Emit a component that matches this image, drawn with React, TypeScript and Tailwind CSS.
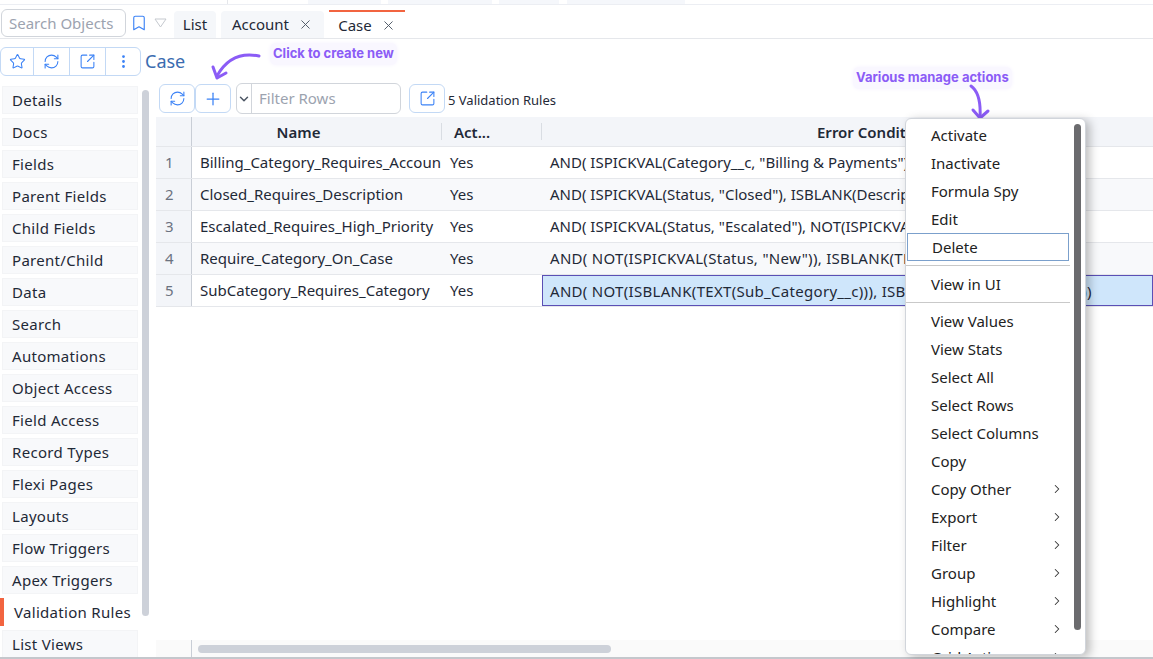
import React from 'react';
import { Bookmark, ChevronDown, ChevronRight, EllipsisVertical, Plus, RefreshCw, Star, SquareArrowOutUpRight, X } from 'lucide-react';

const navItems = [
  'Details', 'Docs', 'Fields', 'Parent Fields', 'Child Fields', 'Parent/Child', 'Data', 'Search', 'Automations',
  'Object Access', 'Field Access', 'Record Types', 'Flexi Pages', 'Layouts', 'Flow Triggers', 'Apex Triggers',
  'Validation Rules', 'List Views',
];

const rows = [
  { name: 'Billing_Category_Requires_Account', cond: 'AND( ISPICKVAL(Category__c, "Billing & Payments"), ISBLANK(AccountId))' },
  { name: 'Closed_Requires_Description', cond: 'AND( ISPICKVAL(Status, "Closed"), ISBLANK(Description))' },
  { name: 'Escalated_Requires_High_Priority', cond: 'AND( ISPICKVAL(Status, "Escalated"), NOT(ISPICKVAL(Priority, "High")))' },
  { name: 'Require_Category_On_Case', cond: 'AND( NOT(ISPICKVAL(Status, "New")), ISBLANK(TEXT(Category__c)))' },
  { name: 'SubCategory_Requires_Category', cond: 'AND( NOT(ISBLANK(TEXT(Sub_Category__c))), ISBLANK(TEXT(Category__c)))' },
];

type MenuEntry = { label: string; sub?: boolean; focus?: boolean } | 'sep';

const menu: MenuEntry[] = [
  { label: 'Activate' }, { label: 'Inactivate' }, { label: 'Formula Spy' }, { label: 'Edit' }, { label: 'Delete', focus: true },
  'sep',
  { label: 'View in UI' },
  'sep',
  { label: 'View Values' }, { label: 'View Stats' }, { label: 'Select All' }, { label: 'Select Rows' }, { label: 'Select Columns' },
  { label: 'Copy' }, { label: 'Copy Other', sub: true }, { label: 'Export', sub: true }, { label: 'Filter', sub: true },
  { label: 'Group', sub: true }, { label: 'Highlight', sub: true }, { label: 'Compare', sub: true }, { label: 'Grid Actions', sub: true },
];

const iconBtn = 'flex items-center justify-center border border-[#c3d9f5] text-[#3b82f6]';
const note = "absolute rounded-md bg-[#f9f7ff] px-[3px] py-[1px] text-[13px] font-bold text-[#8b5cf6] shadow-[0_0_4px_#f6f3ff] [font-family:Inter,sans-serif]";

export default function App() {
  return (
    <div className="relative h-[659px] w-[1153px] overflow-hidden bg-white text-[15px] text-[#1f2937] [font-family:'Noto_Sans',sans-serif]">
      {/* top strip */}
      <div className="flex h-[5px] border-b border-[#eceef3]">
        <div className="w-[228px] border-r border-[#e5e7eb]" />
        <div className="ml-[1px] w-[71px]" />
        <div className="ml-[8px] w-[73px] bg-[#f5f7fb]" />
        <div className="ml-[7px] w-[104px] bg-[#f5f7fb]" />
        <div className="ml-[7px] w-[60px] bg-[#f5f7fb]" />
        <div className="ml-[8px] w-[118px] bg-[#f5f7fb]" />
      </div>

      {/* tab bar */}
      <div className="flex h-[34px] items-end border-b border-[#e5e7eb] pl-[1px]">
        <div className="mb-[1px] flex h-[28px] w-[125px] items-center rounded-md border border-[#d1d5db] pl-[7px] text-[#9ca3af]">Search Objects</div>
        <Bookmark className="mb-[6px] ml-[4px] text-[#3b82f6]" size={18} strokeWidth={1.5} />
        <svg className="mb-[10px] ml-[6px]" width="13" height="10" viewBox="0 0 13 10" fill="none">
          <path d="M1 1h11L6.5 9z" stroke="#c5c9cf" strokeWidth="1" />
        </svg>
        <div className="ml-[7px] flex h-[27px] w-[42px] items-center justify-center rounded-t bg-[#f5f7fa]">List</div>
        <div className="ml-[5px] flex h-[27px] w-[103px] items-center justify-center gap-[9px] rounded-t bg-[#f5f7fa]">
          Account <X size={15} strokeWidth={1.5} className="text-[#4b5563]" />
        </div>
        <div className="ml-[5px] flex h-[28px] w-[76px] items-center justify-center gap-[9px] border-t-2 border-[#f26440] bg-white">
          Case <X size={15} strokeWidth={1.5} className="text-[#4b5563]" />
        </div>
      </div>

      {/* object header */}
      <div className="flex h-[44px] items-start pt-[8px]">
        <div className="flex h-[29px] w-[141px] shrink-0 rounded-md border border-[#c3d9f5] text-[#3b82f6]">
          <div className="flex w-[33px] items-center justify-center border-r border-[#c3d9f5]"><Star size={17} strokeWidth={1.5} /></div>
          <div className="flex w-[36px] items-center justify-center border-r border-[#c3d9f5]"><RefreshCw size={17} strokeWidth={1.5} /></div>
          <div className="flex w-[36px] items-center justify-center border-r border-[#c3d9f5]"><SquareArrowOutUpRight size={17} strokeWidth={1.5} /></div>
          <div className="flex flex-1 items-center justify-center"><EllipsisVertical size={17} strokeWidth={2} /></div>
        </div>
        <span className="ml-[4px] text-[18px] leading-[28px] text-[#3b6cb0]">Case</span>
      </div>

      <div className="flex">
        {/* left side */}
        <div className="flex h-[576px] w-[156px] shrink-0 overflow-hidden pt-[3px]">
          <div className="w-[138px] shrink-0 tracking-[0.3px]">
            {navItems.map((item) => {
              const active = item === 'Validation Rules';
              return (
                <div key={item} className={`mb-[4px] flex h-[28px] items-center ${active ? 'border-l-[4px] border-[#f26440] bg-white pl-[10px]' : 'ml-[2px] border border-[#f3f4f6] bg-[#f8f9fb] pl-[9px]'}`}>
                  {item}
                </div>
              );
            })}
          </div>
          <div className="ml-[4px] mt-[4px] h-[526px] w-[7px] rounded-full bg-[#cdd1d9]" />
        </div>

        {/* right side */}
        <div className="flex min-w-0 flex-1 flex-col">
          <div className="flex h-[34px] items-start pl-[3px]">
            <div className={`${iconBtn} mt-[1px] h-[29px] w-[36px] rounded-md`}><RefreshCw size={17} strokeWidth={1.5} /></div>
            <div className={`${iconBtn} mt-[1px] h-[29px] w-[36px] rounded-md`}><Plus size={20} strokeWidth={1.5} /></div>
            <div className="ml-[5px] flex h-[31px] w-[165px] rounded-md border border-[#d1d5db]">
              <div className="flex w-[15px] items-center justify-center border-r border-[#d1d5db]"><ChevronDown size={14} strokeWidth={2.5} className="text-[#4b5563]" /></div>
              <div className="flex items-center pl-[7px] text-[#9ca3af]">Filter Rows</div>
            </div>
            <div className={`${iconBtn} ml-[8px] mt-[1px] h-[29px] w-[36px] rounded-md`}><SquareArrowOutUpRight size={17} strokeWidth={1.5} /></div>
            <span className="ml-[3px] mt-[8px] text-[13px]">5 Validation Rules</span>
          </div>

          {/* grid */}
          <div className="flex h-[30px] border-b border-[#e5e7eb] bg-[#f3f5f9] font-semibold leading-[31px]">
            <div className="w-[36px] border-r border-[#c9ced6]" />
            <div className="w-[249px] pr-[36px] text-center">Name</div>
            <div className="my-[6px] w-[100px] border-l border-[#d9dde3] pl-[12px] leading-[19px]">Act...</div>
            <div className="my-[6px] flex-1 overflow-hidden whitespace-nowrap border-l border-[#d9dde3] pl-[275px] leading-[19px]">Error Condition Formula</div>
          </div>
          {rows.map((r, i) => (
            <div key={r.name} className={`flex h-[32px] border-b border-[#e5e7eb] ${i % 2 === 1 ? 'bg-[#f8f9fb]' : 'bg-white'}`}>
              <div className="flex w-[36px] items-center border-r border-[#c9ced6] bg-[#f3f5f9] pl-[9px] text-[#6b7280]">{i + 1}</div>
              <div className="w-[249px] overflow-hidden whitespace-nowrap pl-[8px] leading-[31px]">{r.name}</div>
              <div className="w-[101px] pl-[9px] leading-[31px]">Yes</div>
              <div className={`min-w-0 flex-1 overflow-hidden whitespace-nowrap leading-[30px] ${i >= 3 ? 'tracking-[0.3px]' : ''} ${i === 4 ? 'border border-[#5b4fb5] bg-[#cfe6fb] pl-[7px]' : 'pl-[8px]'}`}>{r.cond}</div>
            </div>
          ))}
          <div className="flex-1" />
        </div>
      </div>

      {/* grid horizontal scrollbar */}
      <div className="absolute bottom-[2px] left-[156px] right-0 flex h-[17px] items-center bg-[#fafafa]">
        <div className="h-full w-[36px] border-r border-[#c9ced6]" />
        <div className="ml-[6px] h-[8px] w-[413px] rounded-full bg-[#cdd1d9]" />
      </div>
      <div className="absolute inset-x-0 bottom-0 h-[2px] bg-[#c4c7cc]" />

      {/* annotations */}
      <div className={`${note} left-[270px] top-[43px]`}>Click to create new</div>
      <div className={`${note} left-[853px] top-[67px]`}>Various manage actions</div>
      <svg className="absolute left-[208px] top-[50px]" width="56" height="32" viewBox="0 0 56 32" fill="none" stroke="#8b5cf6" strokeWidth="3" strokeLinecap="round" strokeLinejoin="round">
        <path d="M51 6C36 3 20 6 9 26" />
        <path d="M5 17l4 11 9-5" />
      </svg>
      <svg className="absolute left-[964px] top-[84px]" width="30" height="38" viewBox="0 0 30 38" fill="none" stroke="#8b5cf6" strokeWidth="3" strokeLinecap="round" strokeLinejoin="round">
        <path d="M7 2c7 5 10 15 9 32" />
        <path d="M9 26l7 8 8-7" />
      </svg>

      {/* context menu */}
      <div className="absolute left-[905px] top-[118px] h-[537px] w-[181px] overflow-hidden rounded-md border border-[#d1d5db] bg-white pt-[2px] shadow-[4px_2px_10px_rgba(0,0,0,0.25)]">
        {menu.map((m, i) =>
          m === 'sep' ? (
            <div key={i} className="my-[4px] mr-[15px] h-px bg-[#c9c9c9]" />
          ) : (
            <div key={m.label} className={`relative ml-[1px] mr-[16px] flex h-[28px] items-center pl-[24px] text-[#222] ${m.focus ? 'border border-[#7ba0cc] pl-[23px]' : ''}`}>
              {m.label}
              {m.sub && <ChevronRight size={14} strokeWidth={1.75} className="absolute right-[5px] text-[#333]" />}
            </div>
          ),
        )}
        <div className="absolute right-[4px] top-[5px] h-[506px] w-[7px] rounded-full bg-[#6b6b6e]" />
      </div>
    </div>
  );
}
